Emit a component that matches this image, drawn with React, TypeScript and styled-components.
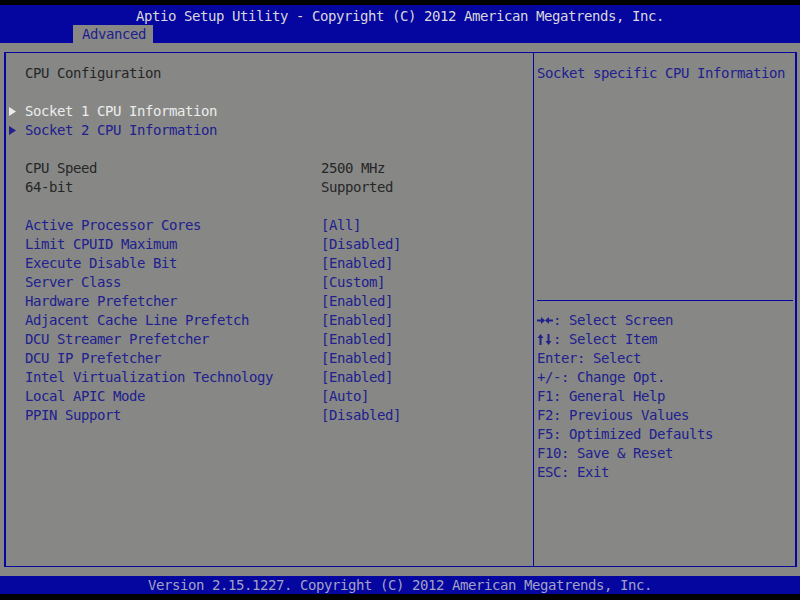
import React from 'react';
import styled, { createGlobalStyle } from 'styled-components';

const BLUE = '#0505a0';
const GRAY = '#878886';
const INK = '#20208e';
const DARK = '#262626';

const GlobalStyle = createGlobalStyle`
  html, body {
    margin: 0;
    padding: 0;
    background: #000;
  }
  body {
    font-family: "DejaVu Sans Mono", "Liberation Mono", monospace;
  }
`;

const Screen = styled.div`
  width: 800px;
  height: 600px;
  box-sizing: border-box;
  padding-top: 5px;
  background: #000;
  display: flex;
  flex-direction: column;
  font-size: 14px;
  letter-spacing: -0.43px;
  white-space: pre;
`;

const Header = styled.header`
  background: ${BLUE};
  height: 38px;
  box-sizing: border-box;
  padding-top: 2px;
  display: flex;
  flex-direction: column;
`;

const Title = styled.div`
  height: 18px;
  line-height: 19px;
  text-align: center;
  color: #d8d8d8;
`;

const TabRow = styled.div`
  height: 18px;
  display: flex;
  padding-left: 73px;
`;

const Tab = styled.div`
  width: 80px;
  box-sizing: border-box;
  padding-left: 9px;
  background: ${GRAY};
  color: ${INK};
  line-height: 19px;
`;

const Main = styled.main`
  flex: 1;
  background: ${GRAY};
  padding: 9px 3px 9px 4px;
  display: flex;
`;

const Frame = styled.div`
  flex: 1;
  display: grid;
  grid-template-columns: 528px 1fr;
  border: 1px solid ${BLUE};
  border-left-width: 2px;
  border-right-width: 2px;
`;

const SettingsPanel = styled.section`
  border-right: 1px solid ${BLUE};
  padding-top: 11px;
  display: flex;
  flex-direction: column;
`;

const Row = styled.div<{ $tone: 'dark' | 'link' | 'active' }>`
  display: grid;
  grid-template-columns: 19px 296px 1fr;
  height: 19px;
  line-height: 19px;
  align-items: center;
  color: ${(p) => (p.$tone === 'active' ? '#ececec' : p.$tone === 'link' ? INK : DARK)};
`;

const Value = styled.span<{ $plain?: boolean }>`
  color: ${(p) => (p.$plain ? DARK : INK)};
`;

const Gap = styled.div`
  height: 19px;
`;

const Pointer = styled.svg`
  margin-left: 3px;
  display: block;
`;

const HelpPanel = styled.aside`
  padding: 11px 2px 0 3px;
  display: flex;
  flex-direction: column;
  color: ${INK};
`;

const Description = styled.div`
  height: 236px;
  line-height: 19px;
`;

const Divider = styled.hr`
  margin: 0 0 10px;
  border: none;
  border-top: 1px solid ${BLUE};
  height: 0;
`;

const HelpLine = styled.div`
  height: 19px;
  line-height: 19px;
  display: flex;
  align-items: center;
`;

const KeyIcon = styled.svg`
  display: block;
  flex: none;
`;

const Footer = styled.footer`
  background: ${BLUE};
  height: 18px;
  line-height: 19px;
  text-align: center;
  color: #a2a2c4;
`;

const Bottom = styled.div`
  height: 6px;
  background: #000;
`;

type Item = { label: string; value: string };

const options: Item[] = [
  { label: 'Active Processor Cores', value: '[All]' },
  { label: 'Limit CPUID Maximum', value: '[Disabled]' },
  { label: 'Execute Disable Bit', value: '[Enabled]' },
  { label: 'Server Class', value: '[Custom]' },
  { label: 'Hardware Prefetcher', value: '[Enabled]' },
  { label: 'Adjacent Cache Line Prefetch', value: '[Enabled]' },
  { label: 'DCU Streamer Prefetcher', value: '[Enabled]' },
  { label: 'DCU IP Prefetcher', value: '[Enabled]' },
  { label: 'Intel Virtualization Technology', value: '[Enabled]' },
  { label: 'Local APIC Mode', value: '[Auto]' },
  { label: 'PPIN Support', value: '[Disabled]' },
];

const help = [
  'Enter: Select',
  '+/-: Change Opt.',
  'F1: General Help',
  'F2: Previous Values',
  'F5: Optimized Defaults',
  'F10: Save & Reset',
  'ESC: Exit',
];

const Arrow: React.FC<{ color: string }> = ({ color }) => (
  <Pointer width="8" height="9" viewBox="0 0 8 9">
    <polygon points="0,0 7,4.5 0,9" fill={color} />
  </Pointer>
);

// left/right arrows drawn into two 8px cells
const SideKeys: React.FC = () => (
  <KeyIcon width="16" height="19" viewBox="0 0 16 19" fill={INK}>
    <rect x="0" y="8.5" width="5" height="2" />
    <polygon points="4,6 8,9.5 4,13" />
    <rect x="11" y="8.5" width="5" height="2" />
    <polygon points="12,6 8,9.5 12,13" />
  </KeyIcon>
);

// up/down arrows drawn into two 8px cells
const UpDownKeys: React.FC = () => (
  <KeyIcon width="16" height="19" viewBox="0 0 16 19" fill={INK}>
    <polygon points="0.5,8 3.5,4 6.5,8" />
    <rect x="2.5" y="7" width="2" height="8" />
    <polygon points="8.5,11 11.5,15 14.5,11" />
    <rect x="10.5" y="4" width="2" height="8" />
  </KeyIcon>
);

const App: React.FC = () => {
  return (
    <>
      <GlobalStyle />
      <Screen>
        <Header>
          <Title>Aptio Setup Utility - Copyright (C) 2012 American Megatrends, Inc.</Title>
          <TabRow>
            <Tab>Advanced</Tab>
          </TabRow>
        </Header>

        <Main>
          <Frame>
            <SettingsPanel>
              <Row $tone="dark">
                <span />
                <span>CPU Configuration</span>
                <span />
              </Row>
              <Gap />
              <Row $tone="active">
                <Arrow color="#ececec" />
                <span>Socket 1 CPU Information</span>
                <span />
              </Row>
              <Row $tone="link">
                <Arrow color={INK} />
                <span>Socket 2 CPU Information</span>
                <span />
              </Row>
              <Gap />
              <Row $tone="dark">
                <span />
                <span>CPU Speed</span>
                <Value $plain>2500 MHz</Value>
              </Row>
              <Row $tone="dark">
                <span />
                <span>64-bit</span>
                <Value $plain>Supported</Value>
              </Row>
              <Gap />
              {options.map((o) => (
                <Row $tone="link" key={o.label}>
                  <span />
                  <span>{o.label}</span>
                  <Value>{o.value}</Value>
                </Row>
              ))}
            </SettingsPanel>

            <HelpPanel>
              <Description>Socket specific CPU Information</Description>
              <Divider />
              <HelpLine>
                <SideKeys />
                <span>: Select Screen</span>
              </HelpLine>
              <HelpLine>
                <UpDownKeys />
                <span>: Select Item</span>
              </HelpLine>
              {help.map((h) => (
                <HelpLine key={h}>{h}</HelpLine>
              ))}
            </HelpPanel>
          </Frame>
        </Main>

        <Footer>Version 2.15.1227. Copyright (C) 2012 American Megatrends, Inc.</Footer>
        <Bottom />
      </Screen>
    </>
  );
};

export default App;
